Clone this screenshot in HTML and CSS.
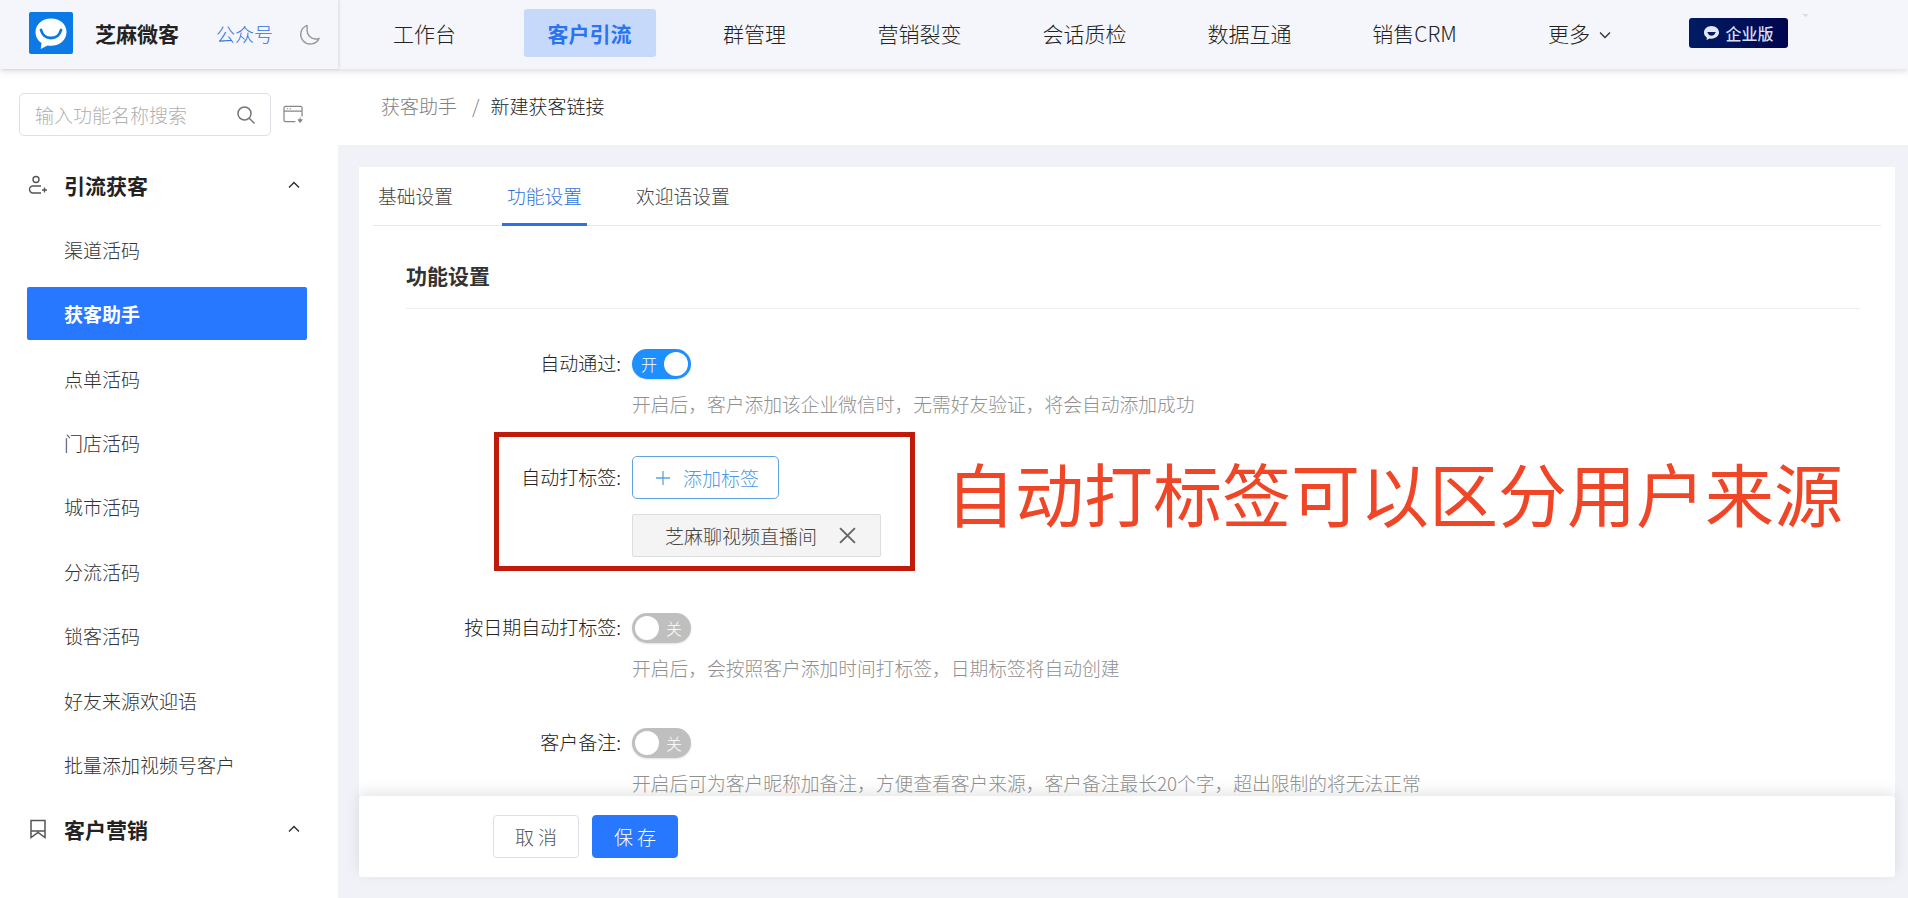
FILE: index.html
```html
<!DOCTYPE html>
<html lang="zh-CN">
<head>
<meta charset="utf-8">
<title>新建获客链接</title>
<link rel="stylesheet" href="styles.css">
</head>
<body>
<div class="app">
  <header class="topbar">
    <div class="brand">
      <svg class="logo" viewBox="0 0 44 42"><rect width="44" height="42" rx="2" fill="#0c7ae6"/><path d="M22 6.500c-9 0-15.500 6-15.500 13.500 0 4.700 2.300 8.500 6 11l-.8 6 6.800-3.600c1.100.2 2.300.3 3.500.3 9 0 15.500-6 15.500-13.700S31 6.500 22 6.500z" fill="#fff"/><path d="M12 18c1.500 5.500 5.500 8 10 8s8.500-2.500 10-8" fill="none" stroke="#0c7ae6" stroke-width="2.800" stroke-linecap="round"/></svg>
      <span class="brand-name">芝麻微客</span>
      <a class="brand-link">公众号</a>
      <svg class="moon" viewBox="0 0 24 24"><path d="M9.500 2.500a10 10 0 1 0 12.500 13.500c-1 .5-2.200.7-3.500.7-5 0-9-4-9-8.900 0-2 0-3.800 0-5.300z" fill="none" stroke="#9a9a9a" stroke-width="1.500" stroke-linejoin="round"/></svg>
    </div>
    <nav class="nav">
      <a class="nav-item">工作台</a>
      <a class="nav-item is-active">客户引流</a>
      <a class="nav-item">群管理</a>
      <a class="nav-item">营销裂变</a>
      <a class="nav-item">会话质检</a>
      <a class="nav-item">数据互通</a>
      <a class="nav-item">销售CRM</a>
      <a class="nav-item">更多<svg class="nav-caret" viewBox="0 0 12 8"><path d="M1 1.500l5 5 5-5" fill="none" stroke="#333" stroke-width="1.300"/></svg></a>
    </nav>
    <div class="edition">
      <svg class="edition-icon" viewBox="0 0 18 17"><path d="M9 1C4.500 1 1 4 1 8c0 2.300 1.200 4.200 3 5.400L3.800 16l3.300-1.700c.6.100 1.200.2 1.900.2 4.500 0 8-3 8-6.700S13.500 1 9 1z" fill="#e4e7f5"/><path d="M4.500 7.500c1 3 2.800 4 4.500 4s3.500-1 4.500-4" fill="#0a1a62"/></svg>
      <span>企业版</span>
    </div>
    <span class="topbar-notch"></span>
  </header>

  <div class="body">
    <aside class="sidebar">
      <div class="search-row">
        <div class="search">
          <span class="search-text">输入功能名称搜索</span>
          <svg class="search-icon" viewBox="0 0 20 20"><circle cx="8.500" cy="8.500" r="6.500" fill="none" stroke="#777" stroke-width="1.500"/><path d="M13.300 13.300l5.200 5.200" stroke="#777" stroke-width="1.500"/></svg>
        </div>
        <svg class="collapse-icon" viewBox="0 0 22 20"><path d="M20 12V3a1.500 1.500 0 0 0-1.500-1.500h-16A1.500 1.500 0 0 0 1 3v13a1.500 1.500 0 0 0 1.500 1.500H13M1 6.500h19" fill="none" stroke="#888" stroke-width="1.300"/><path d="M4 4h1.500M7 4h1.500" stroke="#888"/><path d="M18 13v3M15.800 15.500h4.400L18 18.500z" fill="#888" stroke="#888"/></svg>
      </div>
      <div class="menu">
        <div class="menu-head">
          <svg class="menu-icon" viewBox="0 0 20 20"><circle cx="8" cy="4.500" r="3" fill="none" stroke="#555" stroke-width="1.400"/><path d="M13 11H5a3.500 3.500 0 0 0 0 7h8M14 15h5M16.500 12.500v5" fill="none" stroke="#555" stroke-width="1.400"/></svg>
          <span class="menu-title">引流获客</span>
          <svg class="menu-caret" viewBox="0 0 12 8"><path d="M1 6.500l5-5 5 5" fill="none" stroke="#333" stroke-width="1.500"/></svg>
        </div>
        <a class="menu-item">渠道活码</a>
        <a class="menu-item is-active">获客助手</a>
        <a class="menu-item">点单活码</a>
        <a class="menu-item">门店活码</a>
        <a class="menu-item">城市活码</a>
        <a class="menu-item">分流活码</a>
        <a class="menu-item">锁客活码</a>
        <a class="menu-item">好友来源欢迎语</a>
        <a class="menu-item">批量添加视频号客户</a>
        <div class="menu-head">
          <svg class="menu-icon" viewBox="0 0 20 20"><path d="M3 1.500h14v17l-7-5-7 5zM3 12h14" fill="none" stroke="#555" stroke-width="1.500"/></svg>
          <span class="menu-title">客户营销</span>
          <svg class="menu-caret" viewBox="0 0 12 8"><path d="M1 6.500l5-5 5 5" fill="none" stroke="#333" stroke-width="1.500"/></svg>
        </div>
      </div>
    </aside>

    <main class="main">
      <div class="crumbs">
        <span class="crumb-parent">获客助手</span>
        <span class="crumb-sep">/</span>
        <span class="crumb-current">新建获客链接</span>
      </div>
      <div class="content">
        <section class="card">
          <div class="tabs">
            <a class="tab">基础设置</a>
            <a class="tab is-active">功能设置</a>
            <a class="tab">欢迎语设置</a>
          </div>
          <h2 class="section-title">功能设置</h2>
          <div class="form">
            <div class="row row-tight">
              <label class="row-label">自动通过:</label>
              <div class="row-value">
                <span class="switch is-on"><span class="switch-text">开</span><span class="switch-knob"></span></span>
                <p class="hint">开启后，客户添加该企业微信时，无需好友验证，将会自动添加成功</p>
              </div>
            </div>
            <div class="row row-loose">
              <label class="row-label row-label-tall">自动打标签:</label>
              <div class="row-value">
                <button class="add-tag"><svg class="add-icon" viewBox="0 0 16 16"><path d="M8 1v14M1 8h14" stroke="#5ba4e6" stroke-width="1.300"/></svg>添加标签</button>
                <span class="tag">芝麻聊视频直播间<svg class="tag-close" viewBox="0 0 16 16"><path d="M1 1l14 14M15 1L1 15" stroke="#666" stroke-width="1.800"/></svg></span>
              </div>
            </div>
            <div class="row">
              <label class="row-label">按日期自动打标签:</label>
              <div class="row-value">
                <span class="switch"><span class="switch-knob"></span><span class="switch-text">关</span></span>
                <p class="hint">开启后，会按照客户添加时间打标签，日期标签将自动创建</p>
              </div>
            </div>
            <div class="row">
              <label class="row-label">客户备注:</label>
              <div class="row-value">
                <span class="switch"><span class="switch-knob"></span><span class="switch-text">关</span></span>
                <p class="hint">开启后可为客户昵称加备注，方便查看客户来源，客户备注最长20个字，超出限制的将无法正常</p>
              </div>
            </div>
          </div>
          <div class="mark-box"></div>
          <div class="mark-text">自动打标签可以区分用户来源</div>
        </section>
        <footer class="savebar">
          <button class="btn">取 消</button>
          <button class="btn btn-primary">保 存</button>
        </footer>
      </div>
    </main>
  </div>
</div>
</body>
</html>
```

FILE: styles.css
```css
* { box-sizing: border-box; }
html, body { margin: 0; height: 100%; overflow: hidden; }
body {
  font-family: "Noto Sans CJK SC", "Noto Sans", sans-serif;
  font-size: 19px;
  font-weight: 300;
  color: #333;
  background: #fff;
}
.app { height: 898px; display: flex; flex-direction: column; }

.topbar {
  position: relative;
  z-index: 2;
  flex: none;
  height: 69px;
  display: flex;
  align-items: center;
  background: #f4f6fb;
  box-shadow: 0 2px 7px rgba(0, 0, 0, .14);
}
.brand {
  width: 338px;
  height: 100%;
  flex: none;
  display: flex;
  align-items: center;
  padding-left: 29px;
  box-shadow: 1px 0 3px rgba(0, 0, 0, .12);
}
.logo { width: 44px; height: 42px; flex: none; margin-bottom: 4px; }
.brand-name { margin-left: 22px; font-size: 21px; font-weight: 700; color: #222; margin-bottom: 3px; }
.brand-link { margin-left: 37px; font-size: 19px; color: #2f72dc; margin-bottom: 3px; }
.moon { width: 23px; height: 23px; margin-left: 25px; }

.nav {
  display: grid;
  grid-template-columns: repeat(8, 165px);
  margin-left: 4px;
  height: 100%;
  align-items: center;
}
.nav-item {
  justify-self: center;
  font-size: 21px;
  color: #222;
  margin-bottom: 3px;
  display: flex;
  align-items: center;
}
.nav-item.is-active {
  width: 132px;
  height: 48px;
  justify-content: center;
  border-radius: 3px;
  background: #c6d9fa;
  color: #2b74f0;
  font-weight: 700;
}
.nav-caret { width: 12px; height: 8px; margin-left: 9px; margin-top: 3px; }

.edition {
  margin-left: 27px;
  width: 99px;
  height: 30px;
  margin-bottom: 3px;
  flex: none;
  display: flex;
  align-items: center;
  justify-content: center;
  gap: 5px;
  border-radius: 3px;
  background: linear-gradient(90deg, #001c64, #00064e);
  color: #d8dcf0;
  font-size: 16px;
  font-weight: 500;
}
.edition-icon { width: 17px; height: 16px; }
.topbar-notch {
  position: absolute;
  left: 1802px;
  top: 14px;
  width: 7px;
  height: 3px;
  background: #dcdde2;
  clip-path: polygon(0 0, 100% 0, 50% 100%);
}

.body { flex: 1; min-height: 0; display: flex; }

.sidebar { width: 338px; flex: none; background: #fff; }
.search-row { display: flex; align-items: center; padding: 24px 0 0 19px; }
.search {
  width: 252px;
  height: 43px;
  display: flex;
  align-items: center;
  justify-content: space-between;
  padding: 0 14px 0 15px;
  border: 1px solid #dcdfe6;
  border-radius: 5px;
  background: #fff;
}
.search-text { color: #b0b0b0; }
.search-icon { width: 20px; height: 20px; }
.collapse-icon { width: 21px; height: 19px; margin-left: 12px; }

.menu { display: flex; flex-direction: column; gap: 11.400px; margin-top: 22.500px; }
.menu-head { height: 53px; display: flex; align-items: center; padding-left: 28px; }
.menu-icon { width: 20px; height: 20px; flex: none; }
.menu-title { margin-left: 16px; font-size: 21px; font-weight: 700; color: #222; }
.menu-caret { width: 12px; height: 8px; margin-left: 140px; }
.menu-item {
  height: 53px;
  margin-left: 27px;
  width: 280px;
  padding-left: 37px;
  display: flex;
  align-items: center;
  border-radius: 2px;
  color: #333;
}
.menu-item.is-active { background: #2878ff; color: #fff; font-weight: 700; }

.main { flex: 1; min-width: 0; display: flex; flex-direction: column; }
.crumbs { height: 76px; flex: none; display: flex; align-items: center; padding: 0 0 3px 43px; background: #fff; }
.crumb-parent { color: #808080; }
.crumb-sep { margin: 0 11px 0 15px; color: #808080; }
.crumb-current { color: #222; }

.content {
  flex: 1;
  min-height: 0;
  display: flex;
  flex-direction: column;
  padding: 22px 13px 21px 21px;
  background: #f0f2f7;
}
.card {
  position: relative;
  flex: 1;
  min-height: 0;
  overflow: hidden;
  background: #fff;
}
.tabs {
  height: 59px;
  margin: 0 14px;
  display: flex;
  gap: 44px;
  border-bottom: 1px solid #e6e6e6;
}
.tab { height: 59px; padding: 15px 5px 0; line-height: 28px; font-size: 18.750px; color: #444; }
.tab.is-active { color: #2f72dc; border-bottom: 3px solid #2f70e6; }

.section-title {
  margin: 34px 35px 0 47px;
  padding-bottom: 18px;
  font-size: 21px;
  line-height: 30px;
  font-weight: 700;
  color: #333;
  border-bottom: 1px solid #eeeeee;
}

.form { margin-top: 40px; }
.row { display: grid; grid-template-columns: 262px 1fr; column-gap: 11px; margin-bottom: 44px; }
.row-tight { margin-bottom: 36px; }
.row-loose { margin-bottom: 56px; }
.row-label { line-height: 28px; text-align: right; color: #222; }
.row-label-tall { line-height: 41px; }
.row-value { display: flex; flex-direction: column; align-items: flex-start; }
.hint { margin: 10px 0 1px; line-height: 30px; font-size: 18.750px; color: #909090; white-space: nowrap; }

.switch {
  width: 59px;
  height: 30px;
  padding: 0 3px;
  display: flex;
  align-items: center;
  justify-content: space-between;
  border-radius: 15px;
  background: #bfbfbf;
  box-shadow: 0 1px 2px rgba(0, 0, 0, .12);
}
.switch.is-on { background: #1e8fff; }
.switch-knob { width: 24px; height: 24px; border-radius: 50%; background: #fff; }
.switch-text { font-size: 16px; line-height: 1; color: #fff; margin: 0 6px; }

.add-tag {
  width: 147px;
  height: 43px;
  display: flex;
  align-items: center;
  padding: 0 0 0 22px;
  border: 1px solid #5ba4e6;
  border-radius: 5px;
  background: #fff;
  color: #4f9ae2;
  font: inherit;
}
.add-icon { width: 16px; height: 16px; margin-right: 12px; }
.tag {
  width: 249px;
  height: 43px;
  margin-top: 15px;
  padding-left: 32px;
  display: flex;
  align-items: center;
  border: 1px solid #dddddd;
  border-radius: 2px;
  background: #f4f4f4;
  color: #444;
}
.tag-close { width: 17px; height: 17px; margin-left: 22px; }

.mark-box {
  position: absolute;
  left: 135px;
  top: 265px;
  width: 421px;
  height: 139px;
  border: 5px solid #c01a0b;
}
.mark-text {
  position: absolute;
  left: 587px;
  top: 285px;
  font-size: 69px;
  font-weight: 400;
  line-height: 80px;
  color: #f04628;
  white-space: nowrap;
}

.savebar {
  position: relative;
  flex: none;
  height: 81px;
  display: flex;
  align-items: center;
  gap: 13px;
  padding-left: 134px;
  border-radius: 3px;
  background: #fff;
  box-shadow: 0 -4px 14px rgba(0, 0, 0, .1);
}
.btn {
  width: 86px;
  height: 43px;
  border: 1px solid #dcdfe6;
  border-radius: 4px;
  background: #fff;
  color: #555;
  font: inherit;
}
.btn-primary { border-color: #2878ff; background: #2878ff; color: #fff; }
```
